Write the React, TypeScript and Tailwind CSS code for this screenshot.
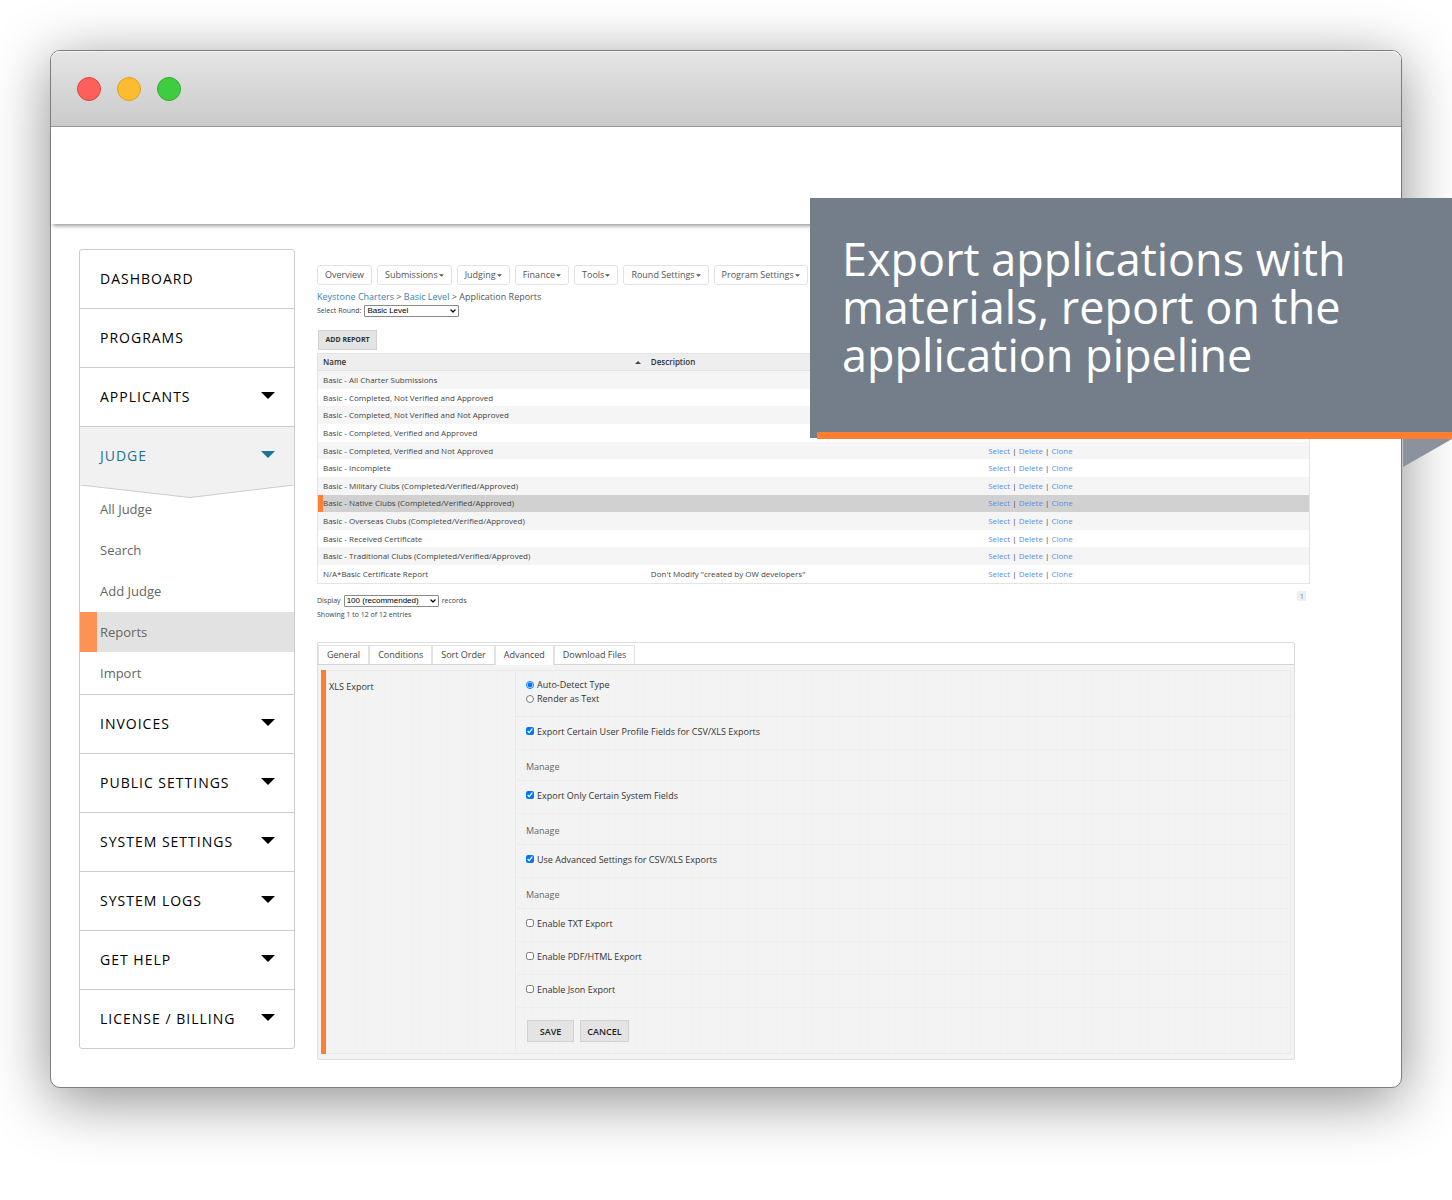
import React from 'react';
import { ChevronDown } from 'lucide-react';

type MenuItem = {
  label: string;
  hasMenu?: boolean;
};

type Report = {
  name: string;
  description?: string;
  selected?: boolean;
};

const MENU_TOP: MenuItem[] = [
  { label: 'DASHBOARD' },
  { label: 'PROGRAMS' },
  { label: 'APPLICANTS', hasMenu: true },
];

const MENU_BOTTOM: MenuItem[] = [
  { label: 'INVOICES', hasMenu: true },
  { label: 'PUBLIC SETTINGS', hasMenu: true },
  { label: 'SYSTEM SETTINGS', hasMenu: true },
  { label: 'SYSTEM LOGS', hasMenu: true },
  { label: 'GET HELP', hasMenu: true },
  { label: 'LICENSE / BILLING', hasMenu: true },
];

const JUDGE_LINKS = ['All Judge', 'Search', 'Add Judge', 'Reports', 'Import'];

const NAV: MenuItem[] = [
  { label: 'Overview' },
  { label: 'Submissions', hasMenu: true },
  { label: 'Judging', hasMenu: true },
  { label: 'Finance', hasMenu: true },
  { label: 'Tools', hasMenu: true },
  { label: 'Round Settings', hasMenu: true },
  { label: 'Program Settings', hasMenu: true },
];

const REPORTS: Report[] = [
  { name: 'Basic - All Charter Submissions' },
  { name: 'Basic - Completed, Not Verified and Approved' },
  { name: 'Basic - Completed, Not Verified and Not Approved' },
  { name: 'Basic - Completed, Verified and Approved' },
  { name: 'Basic - Completed, Verified and Not Approved' },
  { name: 'Basic - Incomplete' },
  { name: 'Basic - Military Clubs (Completed/Verified/Approved)' },
  { name: 'Basic - Native Clubs (Completed/Verified/Approved)', selected: true },
  { name: 'Basic - Overseas Clubs (Completed/Verified/Approved)' },
  { name: 'Basic - Received Certificate' },
  { name: 'Basic - Traditional Clubs (Completed/Verified/Approved)' },
  {
    name: 'N/A*Basic Certificate Report',
    description: 'Don\'t Modify "created by OW developers"',
  },
];

const TABS = ['General', 'Conditions', 'Sort Order', 'Advanced', 'Download Files'];

const Caret = ({ className }: { className: string }) => (
  <svg viewBox="0 0 14 7" className={className} fill="currentColor" aria-hidden="true">
    <path d="M0 0h14L7 7z" />
  </svg>
);

const SidebarButton = ({ label, hasMenu }: MenuItem) => (
  <button
    type="button"
    className="flex h-[59px] w-full items-center justify-between pl-5 pr-[19px] text-left text-sm tracking-[1px] text-black last:h-[58px]"
  >
    {label}
    {hasMenu && <Caret className="mb-1 h-[7px] w-3.5" />}
  </button>
);

const Sidebar = () => (
  <nav className="w-[216px] shrink-0 divide-y divide-[#ccc] rounded-[3px] border border-[#ccc]">
    {MENU_TOP.map((item) => (
      <SidebarButton key={item.label} {...item} />
    ))}
    <div>
      <button
        type="button"
        className="flex h-[58px] w-full items-center justify-between bg-[#f1f1f1] pl-5 pr-[19px] text-left text-sm tracking-[1px] text-[#1d7394]"
      >
        JUDGE
        <Caret className="mb-1 h-[7px] w-3.5" />
      </button>
      <div className="relative pt-1">
        <svg
          viewBox="0 0 214 13"
          preserveAspectRatio="none"
          className="absolute left-0 top-0 h-[13px] w-full"
          aria-hidden="true"
        >
          <path d="M0 0H214L110 12.5z" fill="#f1f1f1" />
          <path d="M0 0L110 12.5L214 0" fill="none" stroke="#ccc" />
        </svg>
        {JUDGE_LINKS.map((link) => (
          <a
            key={link}
            href="#"
            className={
              link === 'Reports'
                ? 'mb-px flex h-10 items-center border-l-[17px] border-[#fc9254] bg-[#e2e2e2] pl-[3px] pt-0.5 text-[13px] text-[#666]'
                : 'relative mb-px flex h-10 items-center pl-5 pt-0.5 text-[13px] text-[#666]'
            }
          >
            {link}
          </a>
        ))}
      </div>
    </div>
    {MENU_BOTTOM.map((item) => (
      <SidebarButton key={item.label} {...item} />
    ))}
  </nav>
);

type SelectProps = {
  id: string;
  value: string;
};

const SmallSelect = ({ id, value }: SelectProps) => (
  <span className="relative inline-flex">
    <select
      id={id}
      defaultValue={value}
      className="h-3 w-[95px] appearance-none rounded-[1px] border border-[#8a8a8a] bg-white pl-0.5 font-['Liberation_Sans',Arial,sans-serif] text-[8px] leading-[10px] text-black"
    >
      <option>{value}</option>
    </select>
    <ChevronDown
      className="pointer-events-none absolute right-0.5 top-0.5 h-2 w-2 text-black"
      strokeWidth={4}
    />
  </span>
);

const ReportsTable = () => (
  <table className="h-[231px] w-full table-fixed border-collapse border border-[#e4e4e4] text-left text-[8px] leading-[12px] text-[#444]">
    <thead>
      <tr className="h-[17px] border-b border-[#e2e2e2] bg-[#eee] text-[#333]">
        <th className="w-[33%] pl-[5px] pr-1 font-semibold">
          <span className="flex items-center justify-between">
            Name
            <svg viewBox="0 0 6 3" className="h-[3px] w-1.5" fill="#444" aria-hidden="true">
              <path d="M0 3h6L3 0z" />
            </svg>
          </span>
        </th>
        <th className="w-[34%] px-1.5 font-semibold">Description</th>
        <th className="w-[33%] px-1.5" aria-label="Actions" />
      </tr>
    </thead>
    <tbody>
      {REPORTS.map((report) => (
        <tr key={report.name} className={report.selected ? 'bg-[#d1d1d1]' : 'odd:bg-[#f5f5f5]'}>
          <td
            className={
              report.selected ? 'pl-[5px] shadow-[inset_5px_0_0_#ff7f32]' : 'pl-[5px]'
            }
          >
            {report.name}
          </td>
          <td className="px-1.5">{report.description}</td>
          <td className="px-1.5">
            <a href="#" className="text-[#5b8fe6]">Select</a>
            {' | '}
            <a href="#" className="text-[#5b8fe6]">Delete</a>
            {' | '}
            <a href="#" className="text-[#5b8fe6]">Clone</a>
          </td>
        </tr>
      ))}
    </tbody>
  </table>
);

type OptionProps = {
  label: string;
  checked?: boolean;
};

const CheckOption = ({ label, checked }: OptionProps) => (
  <div className="flex h-[33px] items-center border-b border-[#eee] pb-1 pl-2.5">
    <label className="flex items-center gap-[3px]">
      <input type="checkbox" defaultChecked={checked} className="h-2 w-2" />
      {label}
    </label>
  </div>
);

const ManageRow = () => (
  <div className="flex h-[31px] items-center border-b border-[#eee] pl-2.5 pt-0.5">
    <a href="#" className="text-[#666]">Manage</a>
  </div>
);

const SettingsPanel = () => (
  <section className="mr-[15px] mt-[21px] rounded-[2px] border border-[#ddd] bg-[#f3f3f3] text-[9px] leading-[13px] text-[#333]">
    <div role="tablist" className="flex rounded-t-[2px] border-b border-[#d4d4d4] bg-white pt-0.5">
      {TABS.map((tab) => (
        <button
          key={tab}
          type="button"
          role="tab"
          aria-selected={tab === 'Advanced'}
          className={
            tab === 'Advanced'
              ? '-mb-px h-5 border-x border-t border-[#e2e2e2] bg-white px-2 pb-0.5 font-medium text-[#444]'
              : 'h-[19px] border-x border-t border-[#e2e2e2] bg-white px-2 pb-px font-medium text-[#444]'
          }
        >
          {tab}
        </button>
      ))}
    </div>
    <div className="mx-[3px] my-[5px] flex bg-[repeating-linear-gradient(90deg,#f1f1f1_0_1px,#f3f3f3_1px_7px)]">
      <div className="w-[5px] shrink-0 bg-[#ff7f32]" />
      <div className="w-[190px] shrink-0 border-y border-r border-[#eaeaea] pl-[3px] pt-[9px]">
        XLS Export
      </div>
      <div className="flex-1 border-y border-r border-[#eaeaea]">
        <div className="flex h-[46px] flex-col gap-px border-b border-[#eaeaea] pl-2.5 pt-[7px]">
          <label className="flex items-center gap-[3px]">
            <input type="radio" name="xls" defaultChecked className="h-2 w-2" />
            Auto-Detect Type
          </label>
          <label className="flex items-center gap-[3px]">
            <input type="radio" name="xls" className="h-2 w-2" />
            Render as Text
          </label>
        </div>
        <CheckOption label="Export Certain User Profile Fields for CSV/XLS Exports" checked />
        <ManageRow />
        <CheckOption label="Export Only Certain System Fields" checked />
        <ManageRow />
        <CheckOption label="Use Advanced Settings for CSV/XLS Exports" checked />
        <ManageRow />
        <CheckOption label="Enable TXT Export" />
        <CheckOption label="Enable PDF/HTML Export" />
        <CheckOption label="Enable Json Export" />
        <div className="flex gap-1.5 pb-[11px] pl-[11px] pt-3">
          <button type="button" className="h-[22px] w-[47px] border border-[#d2d2d2] bg-[#e4e4e4] font-semibold text-[#222]">
            SAVE
          </button>
          <button type="button" className="h-[22px] w-[49px] border border-[#d2d2d2] bg-[#e4e4e4] font-semibold text-[#222]">
            CANCEL
          </button>
        </div>
      </div>
    </div>
  </section>
);

const Callout = () => (
  <aside className="absolute right-0 top-[198px] h-60 w-[642px] bg-[#747e8a] pl-8 pt-[37px]">
    <p className="font-['Open_Sans','Noto_Sans',sans-serif] text-[45px] leading-[48px] text-white">
      Export applications with
      <br />
      materials, report on the
      <br />
      application pipeline
    </p>
    {/* accent line and folded corner */}
    <div className="absolute -bottom-px left-[7px] right-0 h-[7px] bg-[#ff7f32]" />
    <svg viewBox="0 0 49 28" className="absolute right-0 top-[241px] h-7 w-[49px]" aria-hidden="true">
      <path d="M0 0h49L0 28z" fill="#8b919d" />
    </svg>
  </aside>
);

const App: React.FC = () => (
  <div className="relative overflow-hidden bg-white px-[50px] pb-28 pt-[50px] font-['Open_Sans','Noto_Sans',sans-serif]">
    <div className="rounded-[10px] border border-[#7d7d7d] bg-white shadow-[0_12px_60px_rgba(0,0,0,0.45)]">
      <div className="flex h-[76px] items-center gap-4 rounded-t-[9px] border-b border-[#999] bg-linear-to-b from-[#e5e5e5] to-[#cacaca] pl-[26px] shadow-[inset_0_1px_0_#f4f4f4]">
        <span className="h-6 w-6 rounded-full border border-[#e2433f] bg-[#fc605b]" />
        <span className="h-6 w-6 rounded-full border border-[#e0a023] bg-[#fdbc2f]" />
        <span className="h-6 w-6 rounded-full border border-[#2fae2f] bg-[#3fcc40]" />
      </div>
      <header className="h-[97px] shadow-[0_4px_4px_-2px_rgba(0,0,0,0.4)]" />

      <div className="flex items-start gap-[22px] pb-[27px] pl-7 pr-[91px] pt-[25px]">
        <Sidebar />
        <main className="min-w-0 flex-1 pt-4 text-[7px] leading-[12px] text-[#444]">
          <div className="flex gap-[5px]">
            {NAV.map(({ label, hasMenu }) => (
              <button
                key={label}
                type="button"
                className="flex h-5 items-center rounded-[3px] border border-[#e2e2e2] px-[7px] text-[9px] whitespace-nowrap text-[#555]"
              >
                {label}
                {hasMenu && <Caret className="ml-px h-[3px] w-[5px]" />}
              </button>
            ))}
          </div>
          <div className="mt-1.5 text-[9px] text-[#555]">
            <a href="#" className="text-[#3d82ad]">Keystone Charters</a>
            {' > '}
            <a href="#" className="text-[#3d82ad]">Basic Level</a>
            {' > Application Reports'}
          </div>
          <div className="mt-0.5 flex items-center gap-[3px]">
            <label htmlFor="round">Select Round:</label>
            <SmallSelect id="round" value="Basic Level" />
          </div>
          <button
            type="button"
            className="mb-[3px] ml-px mt-[13px] block h-5 w-[59px] border border-[#d2d2d2] bg-[#e4e4e4] font-bold text-[#333]"
          >
            ADD REPORT
          </button>

          <ReportsTable />

          <div className="flex items-start justify-between pr-1 pt-[7px]">
            <div>
              <div className="flex items-center gap-[3px] pt-1">
                <label htmlFor="records">Display</label>
                <SmallSelect id="records" value="100 (recommended)" />
                <span>records</span>
              </div>
              <p className="mt-0.5">Showing 1 to 12 of 12 entries</p>
            </div>
            <a href="#" className="bg-[#eee] px-0.5 text-[8px] leading-[10px] text-[#5b8fe6]">1</a>
          </div>

          <SettingsPanel />
        </main>
      </div>
    </div>

    <Callout />
  </div>
);

export default App;
